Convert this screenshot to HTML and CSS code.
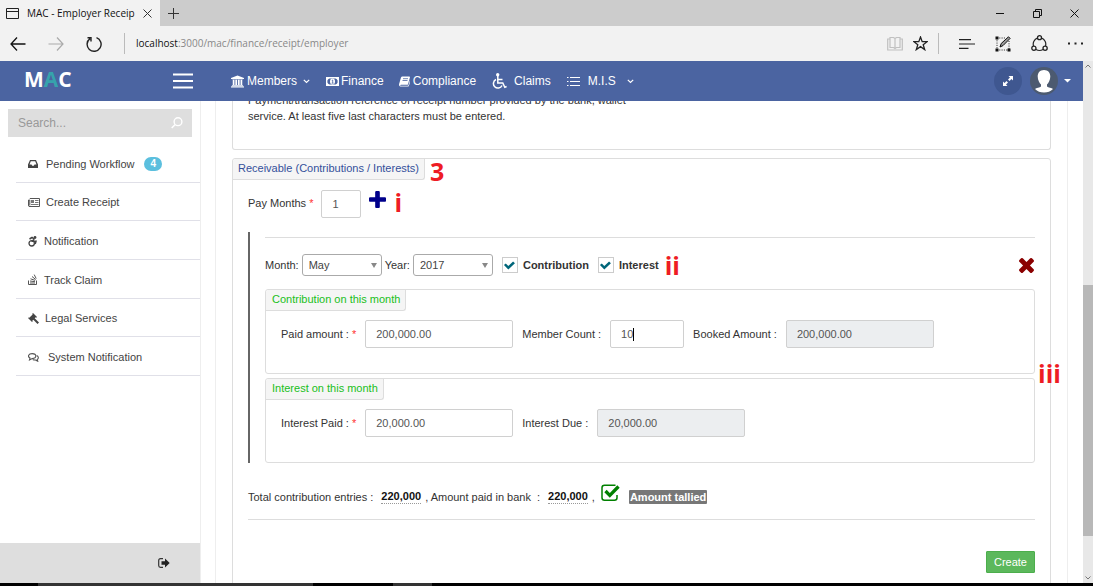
FILE: index.html
```html
<!DOCTYPE html>
<html lang="en">
<head>
<meta charset="utf-8">
<title>MAC - Employer Receipt</title>
<link rel="stylesheet" href="styles.css">
</head>
<body>
<div class="tabbar">
  <div class="tab">
    <svg class="tab-icon" width="13" height="11" viewBox="0 0 13 11"><path d="M.5.5h12v10H.5zM.5 3.500h12" fill="none" stroke="#222"/></svg>
    <span class="tab-title">MAC - Employer Receip</span>
    <button class="plain" aria-label="Close tab"><svg width="9" height="9" viewBox="0 0 9 9"><path d="M.5.5l8 8M8.500.5l-8 8" stroke="#333" fill="none"/></svg></button>
  </div>
  <button class="plain new-tab" aria-label="New tab"><svg width="11" height="11" viewBox="0 0 11 11"><path d="M5.500 0v11M0 5.500h11" stroke="#333"/></svg></button>
  <div class="window-buttons">
    <button class="plain" aria-label="Minimize"><svg width="9" height="9" viewBox="0 0 9 9"><path d="M0 4.500h8" stroke="#111"/></svg></button>
    <button class="plain" aria-label="Restore"><svg width="9" height="9" viewBox="0 0 9 9"><path d="M.5 2.500h6v6h-6zM2.500 2.500v-2h6v6h-2" stroke="#111" fill="none"/></svg></button>
    <button class="plain" aria-label="Close"><svg width="9" height="9" viewBox="0 0 9 9"><path d="M.5.5l8 8M8.500.5l-8 8" stroke="#111"/></svg></button>
  </div>
</div>
<div class="toolbar">
  <div class="nav-buttons">
    <button class="plain" aria-label="Back"><svg width="16" height="14" viewBox="0 0 16 14"><path d="M7 .5L1 7l6 6.500M1 7h14.500" fill="none" stroke="#111" stroke-width="1.300"/></svg></button>
    <button class="plain" aria-label="Forward"><svg width="16" height="14" viewBox="0 0 16 14"><path d="M9 .5L15 7l-6 6.500M15 7H.5" fill="none" stroke="#aaa" stroke-width="1.200"/></svg></button>
    <button class="plain" aria-label="Refresh"><svg width="16" height="16" viewBox="0 0 16 16"><path d="M10.500 1.700A7 7 0 1 1 4 2.600M1.500 1.800H5V5.500" fill="none" stroke="#222" stroke-width="1.400"/></svg></button>
  </div>
  <div class="address"><b>localhost</b>:3000/mac/finance/receipt/employer</div>
  <div class="tools">
    <button class="plain" aria-label="Reading view"><svg width="16" height="15" viewBox="0 0 16 15"><path d="M3 1.500h3.500L8 2.500l1.500-1H13v10H9.500L8 12.500l-1.500-1H3zM8 2.500v10M3 3H.7v11h14.600V3H13" fill="none" stroke="#c0c0c0" stroke-width="1.200"/></svg></button>
    <button class="plain star" aria-label="Favorite"><svg width="15" height="15" viewBox="0 0 15 15"><path d="M7.500 1l1.700 4.700h4.900l-3.900 3 1.500 4.900-4.200-3-4.200 3 1.500-4.900-3.900-3h4.900z" fill="none" stroke="#222" stroke-width="1.300"/></svg></button>
    <button class="plain" aria-label="Hub"><svg width="16" height="10" viewBox="0 0 16 10"><path d="M0 .7h12M0 5h16M0 9.300h9.500" stroke="#222" stroke-width="1.200"/></svg></button>
    <button class="plain" aria-label="Make a note"><svg width="16" height="16" viewBox="0 0 16 16"><path d="M2 2h9M2 2v12M2 14h12M14 5v9" fill="none" stroke="#222" stroke-dasharray="1 1.300"/><path d="M.5.5h3v3h-3zM.5 12.500h3v3h-3zM12.500 12.500h3v3h-3z" fill="#111"/><path d="M5 11l1.200-3.500L13.500.8l1.600 1.600L8 9.600z" fill="#999" stroke="#111"/></svg></button>
    <button class="plain" aria-label="Share"><svg width="17" height="17" viewBox="0 0 17 17"><path d="M6.500 3A6.500 6.500 0 0 0 2.500 11M10.500 3a6.500 6.500 0 0 1 4 8M5 14.500q3.500 2 7 0" fill="none" stroke="#222" stroke-width="1.200"/><g fill="none" stroke="#222" stroke-width="1.300"><circle cx="8.500" cy="2.700" r="2"/><circle cx="2.900" cy="13.300" r="2.100"/><circle cx="14.100" cy="13.300" r="2.100"/></g></svg></button>
    <button class="plain" aria-label="More"><svg width="16" height="3" viewBox="0 0 16 3"><path d="M0 .5h2v2H0zM6.500.5h2v2h-2zM13 .5h2v2h-2z" fill="#222"/></svg></button>
  </div>
</div>

<div class="viewport">
  <div class="app">
    <header class="header">
      <a class="logo" href="#">M<span>A</span>C</a>
      <button class="plain menu" aria-label="Toggle menu"><svg width="20" height="16" viewBox="0 0 20 16"><path d="M0 1.500h20M0 8h20M0 14.500h20" stroke="#fff" stroke-width="2"/></svg></button>
      <nav class="topnav">
        <a class="members" href="#"><svg width="13" height="13" viewBox="-128 0 1920 1792"><path fill="#fff" d="M832 0l960 384v128h-128q0 26-20 45t-48 19H68q-28 0-48-19T0 512h-128V384zM128 640h256v768h128V640h256v768h128V640h256v768h128V640h256v768h59q28 0 48 19t20 45v64H0v-64q0-26 20-45t48-19h60zm1595 960q28 0 48 19t20 45v128H-128v-128q0-26 20-45t48-19z"/></svg>Members<svg class="chev" width="7" height="5" viewBox="0 0 7 5"><path d="M.8.800L3.500 3.500 6.200.8" fill="none" stroke="#fff" stroke-width="1.200"/></svg></a>
        <a class="finance" href="#"><svg width="13" height="9" viewBox="0 0 13 9"><path d="M.7.700h11.600v7.600H.7z" fill="none" stroke="#fff" stroke-width="1.400"/><path fill="#fff" d="M1 1h2.500L1 3.500zM12 1v2.500L9.500 1zM1 8V5.500L3.500 8zM12 8H9.500L12 5.500z"/><ellipse cx="6.500" cy="4.500" rx="2.500" ry="3" fill="#fff"/><path d="M5.800 3.500l.9-.5v3M5.600 6.200h2" fill="none" stroke="#4b64a1" stroke-width=".8"/></svg>Finance</a>
        <a class="compliance" href="#"><svg width="11" height="11" viewBox="0 0 11 11"><path fill="#fff" d="M3.300.5h7q.9.200.6 1L9 8.200q-.2.600-.8.600H2q-1 .2-.7.900h7.400q.5 0 .8-.6L11 4q.2 4-1.500 6.500H1.300Q-.2 10.200.1 8L2 1.500Q2.400.6 3.300.5z"/><path d="M4 2.700h5M3.500 4.500h5" stroke="#4b64a1" stroke-width=".8"/></svg>Compliance</a>
        <a class="claims" href="#"><svg width="15" height="16" viewBox="0 0 15 16"><circle cx="5.700" cy="1.800" r="1.700" fill="#fff"/><path d="M5.800 3v7h5l2 4.300 1.800-.8M6 6.500h4.500" fill="none" stroke="#fff" stroke-width="1.500"/><path d="M4 6.500A4.500 4.500 0 1 0 10 12.500" fill="none" stroke="#fff" stroke-width="1.500"/></svg>Claims</a>
        <a class="mis" href="#"><svg width="13" height="11" viewBox="0 0 13 11"><path d="M0 1.500h1.500M3 1.500h10M0 5.500h1.500M3 5.500h10M0 9.500h1.500M3 9.500h10" stroke="#fff"/></svg>M.I.S<svg class="chev" width="7" height="5" viewBox="0 0 7 5"><path d="M.8.800L3.500 3.500 6.200.8" fill="none" stroke="#fff" stroke-width="1.200"/></svg></a>
      </nav>
      <div class="user">
        <button class="plain expand" aria-label="Full screen"><svg width="10" height="10" viewBox="0 0 10 10"><path fill="#fff" d="M5.500 0H10v4.500L8.500 3 6.500 5 5 3.500l2-2zM4.500 10H0V5.500L1.500 7l2-2L5 6.500l-2 2z"/></svg></button>
        <button class="plain avatar" aria-label="Account"><svg width="28" height="28" viewBox="0 0 28 28"><circle cx="14" cy="14" r="14" fill="#4c5a70"/><path fill="#fff" d="M14 3c4 0 6.300 2.800 6.300 6.500S18.500 16 17 17.500v2c1 1 5 1.500 6 2.500Q19.500 25.500 14 25.500T5 22c1-1 5-1.500 6-2.500v-2C9.500 16 7.700 13.200 7.700 9.500S10 3 14 3z"/></svg><svg width="7" height="4" viewBox="0 0 7 4"><path d="M0 0h7L3.500 3.500z" fill="#fff"/></svg></button>
      </div>
    </header>

    <div class="main">
      <aside class="sidebar">
        <form class="search"><input type="search" aria-label="Search" placeholder="Search..."><svg width="12" height="12" viewBox="0 0 12 12"><circle cx="7" cy="4.700" r="3.900" fill="none" stroke="#fff" stroke-width="1.400"/><path d="M4 7.700L.7 11" stroke="#fff" stroke-width="1.500"/></svg></form>
        <ul class="side-list">
          <li><a href="#"><svg width="10" height="8" viewBox="0 0 10 8"><path fill="#444" fill-rule="evenodd" d="M2 0h6l2 4.500V8H0V4.500zM2.800 1.200L1.500 4.500h2l.7 1.300h1.600l.7-1.300h2L7.200 1.200z"/></svg>Pending Workflow<span class="badge">4</span></a></li>
          <li class="receipt"><a href="#"><svg width="12" height="9" viewBox="0 0 12 9"><path d="M1.800.5h9.700v8H1Q.5 8.500.5 7V2h1.300v5.500" fill="none" stroke="#555"/><path d="M3 2h3v3H3z" fill="#777"/><path d="M7 2.500h3.500M7 4.500h3.500M3 6.500h7.500" stroke="#777"/></svg>Create Receipt</a></li>
          <li><a href="#"><svg width="9" height="11" viewBox="0 0 9 11"><circle cx="7" cy="1.500" r="1.400" fill="#444"/><path d="M1.500 3L4 1.500 6 3 4.500 5.200H8L7.200 8" fill="none" stroke="#444" stroke-width="1.500"/><circle cx="3.700" cy="7.300" r="2.700" fill="none" stroke="#444" stroke-width="1.300"/></svg>Notification</a></li>
          <li><a href="#"><svg width="9" height="11" viewBox="0 0 9 11"><path d="M.5 6.500v4h8v-4M2 9h5M2 7l5 .7M2.500 4.800l4.600 1.600M4 2.500l3.700 3M6.200.6l2 4" fill="none" stroke="#555"/></svg>Track Claim</a></li>
          <li class="legal"><a href="#"><svg width="11" height="11" viewBox="0 0 11 11"><path fill="#444" d="M5 0l4 4-.7.700-.6-.4-1 1L11 9.500 9.500 11 5.300 6.700l-1 1 .4.700L4 9 0 5l.7-.6.600.3L4.600 1.400 4.300.7z"/></svg>Legal Services</a></li>
          <li class="system"><a href="#"><svg width="11" height="9" viewBox="0 0 11 9"><path d="M4.200.6c2 0 3.600 1 3.600 2.500S6.200 5.600 4.200 5.600L1.500 7l.5-2C-.7 3.500.5.6 4.200.6zM8.700 2.500c2 1 2.200 3 .5 4l.5 1.700L7.500 7q-1.500.2-2.700-.5" fill="none" stroke="#555" stroke-width="1.100"/></svg>System Notification</a></li>
        </ul>
        <div class="side-footer"><button class="plain" aria-label="Log out"><svg width="12" height="10" viewBox="0 0 12 10"><path d="M5 .7H2.500Q.7.700.7 2.500v5q0 1.800 1.800 1.800H5" fill="none" stroke="#333" stroke-width="1.200"/><path fill="#222" d="M3.500 3.200H7V.5L11.700 5 7 9.500V6.800H3.500z"/></svg></button></div>
      </aside>

      <main class="content">
        <div class="panel">
          <section class="box reference"><p>Payment/transaction reference of receipt number provided by the bank, wallet service. At least five last characters must be entered.</p></section>

          <fieldset class="box receivable">
            <legend>Receivable (Contributions / Interests)</legend><span class="mark mark-title">3</span>
            <div class="inner">
              <div class="pay-row">
                <label for="months">Pay Months <i>*</i></label>
                <input id="months" class="field tiny" value="1">
                <button class="plain" aria-label="Add month"><svg width="17" height="17" viewBox="192 128 1408 1408"><path fill="#00008b" d="M1600 736v192q0 40-28 68t-68 28h-416v416q0 40-28 68t-68 28H800q-40 0-68-28t-28-68v-416H288q-40 0-68-28t-28-68V736q0-40 28-68t68-28h416V224q0-40 28-68t68-28h192q40 0 68 28t28 68v416h416q40 0 68 28t28 68z"/></svg></button>
                <span class="mark">i</span>
              </div>

              <div class="month-entry">
                <hr>
                <div class="month-row">
                  <label for="month">Month:</label>
                  <span class="pick"><select id="month"><option>May</option></select></span>
                  <label for="year">Year:</label>
                  <span class="pick"><select id="year"><option>2017</option></select></span>
                  <label class="check"><input type="checkbox" checked>Contribution</label>
                  <label class="check"><input type="checkbox" checked>Interest</label>
                  <span class="mark">ii</span>
                  <button class="plain remove" aria-label="Remove month"><svg width="15" height="15" viewBox="302 238 1188 1188"><path fill="#8b0000" d="M1490 1194q0 40-28 68l-136 136q-28 28-68 28t-68-28l-294-294-294 294q-28 28-68 28t-68-28l-136-136q-28-28-28-68t28-68l294-294-294-294q-28-28-28-68t28-68l136-136q28-28 68-28t68 28l294 294 294-294q28-28 68-28t68 28l136 136q28 28 28 68t-28 68l-294 294 294 294q28 28 28 68z"/></svg></button>
                </div>
                <fieldset class="box sub">
                  <legend>Contribution on this month</legend>
                  <div class="fields">
                    <label for="paid">Paid amount : <i>*</i></label><input id="paid" class="field wide" value="200,000.00">
                    <label for="count">Member Count :</label><span class="caret-wrap"><input id="count" class="field small" value="10"><span class="caret"></span></span>
                    <label for="booked">Booked Amount :</label><input id="booked" class="field wide" value="200,000.00" readonly>
                  </div>
                </fieldset>
                <fieldset class="box sub">
                  <legend>Interest on this month</legend>
                  <div class="fields">
                    <label for="ipaid">Interest Paid : <i>*</i></label><input id="ipaid" class="field wide" value="20,000.00">
                    <label for="idue">Interest Due :</label><input id="idue" class="field wide" value="20,000.00" readonly>
                  </div>
                </fieldset>
                <span class="mark mark-side">iii</span>
              </div>

              <div class="totals">
                <span>Total contribution entries :</span><b>220,000</b><span>, Amount paid in bank&nbsp; :</span><b>220,000</b><span>,</span>
                <svg width="20" height="18" viewBox="0 0 20 18"><path d="M14.500 1.200H3.500Q1 1.200 1 3.700v10Q1 16.200 3.500 16.200h10q2.500 0 2.500-2.500V11" fill="none" stroke="#008000" stroke-width="1.500"/><path d="M4.500 7l4.300 4.300L17.500 2.500" fill="none" stroke="#008000" stroke-width="3.300"/></svg>
                <span class="tally">Amount tallied</span>
              </div>
              <hr>
              <div class="actions"><button class="create" type="button">Create</button></div>
            </div>
          </fieldset>
        </div>
      </main>
    </div>
  </div>
  <div class="scrollbar">
    <svg width="6" height="4" viewBox="0 0 6 4"><path d="M.5 3.500L3 1l2.500 2.500" fill="none" stroke="#777"/></svg>
    <div class="thumb"></div>
    <svg width="6" height="4" viewBox="0 0 6 4"><path d="M.5.5L3 3 5.500.5" fill="none" stroke="#777"/></svg>
  </div>
</div>
<div class="taskbar"><span class="task-search"></span><span class="task-item"></span></div>
</body>
</html>
```
FILE: styles.css
```css
* { box-sizing: border-box; }
body {
  margin: 0;
  height: 100vh;
  display: flex;
  flex-direction: column;
  overflow: hidden;
  background: #fff;
  color: #333;
  font: 11px/16px "Liberation Sans", Arial, sans-serif;
}
svg { display: block; flex: none; }
a { color: inherit; text-decoration: none; }
i { color: #f33; font-style: normal; }
hr { margin: 0; border: 0; border-top: 1px solid #ddd; }
.plain { display: flex; align-items: center; padding: 0; border: 0; background: none; }

/* Browser window */
.tabbar, .toolbar { display: flex; align-items: center; flex: none; font-family: "Open Sans", sans-serif; }
.tabbar { height: 26px; background: #ccc; }
.tab { width: 160px; height: 26px; display: flex; align-items: center; gap: 8px; padding: 0 8px 0 6px; background: #f2f2f2; color: #111; font-size: 10px; }
.tab-title { flex: 1; white-space: nowrap; }
.new-tab { margin-left: 8px; }
.window-buttons { display: flex; gap: 28px; margin-left: auto; padding-right: 14px; }
.toolbar { height: 35px; background: #f2f2f2; }
.nav-buttons { display: flex; align-items: center; gap: 22px; padding: 0 22px 0 10px; }
.address { flex: 1; height: 21px; padding-left: 11px; border-left: 1px solid #bbb; color: #888; font-size: 10px; line-height: 20px; }
.address b { color: #111; font-weight: 400; }
.tools { display: flex; align-items: center; gap: 20px; padding-right: 9px; }
.tools .star { height: 21px; margin-left: -10px; padding-right: 10px; border-right: 1px solid #bbb; }
.viewport { flex: 1; min-height: 0; display: flex; }
.app { flex: 1; min-width: 0; display: flex; flex-direction: column; }
.scrollbar { width: 10px; display: flex; flex-direction: column; align-items: center; gap: 3px; padding: 3px 0; background: #e8e8e8; }
.thumb { width: 10px; height: 251px; margin-top: auto; margin-bottom: 37px; background: #b8b8b8; }
.taskbar { display: flex; flex: none; height: 3px; padding-left: 38px; gap: 80px; background: #000; }
.task-search { width: 275px; background: #333; }
.task-item { width: 39px; background: #333; }

/* Application header */
.header { flex: none; height: 40px; display: flex; align-items: center; background: #4b64a1; color: #fff; }
.logo { width: 173px; padding: 0 0 4px 24px; font: 700 21px/24px "Open Sans", sans-serif; }
.logo span { color: #36a3ac; }
.menu { width: 58px; }
.topnav { display: flex; align-items: center; gap: 16px; font-size: 12px; white-space: nowrap; }
.topnav a { display: flex; align-items: center; gap: 3px; }
.topnav .finance { gap: 2px; }
.topnav .compliance { gap: 3px; margin-left: -1px; }
.topnav .claims { gap: 7px; }
.topnav .mis { gap: 8px; }
.topnav .chev { margin-left: 3px; }
.user { display: flex; align-items: center; gap: 8px; margin-left: auto; padding-right: 12px; }
.expand { width: 28px; height: 28px; justify-content: center; border-radius: 50%; background: #3f5790; }
.avatar { gap: 6px; }

/* Sidebar */
.main { flex: 1; min-height: 0; display: flex; }
.sidebar { width: 201px; flex: none; display: flex; flex-direction: column; border-right: 1px solid #eee; }
.search { display: flex; align-items: center; margin: 8px 8px 0; padding: 0 9px 0 10px; height: 28px; background: #dedede; }
.search input { flex: 1; min-width: 0; padding: 0; border: 0; background: none; font: inherit; font-size: 12px; }
.search input::placeholder { color: #999; }
.side-list { display: grid; grid-auto-rows: 1fr; height: 232px; margin: 7px 0 0 16px; padding: 0; list-style: none; color: #444; }
.side-list li { display: flex; align-items: center; padding: 2px 0 0 12px; border-bottom: 1px solid #e0e0e8; }
.side-list a { display: flex; align-items: center; gap: 7px; }
.side-list li:first-child a { gap: 8px; }
.side-list .system a { gap: 9px; }
.side-list .legal a, .side-list .receipt a { gap: 6px; }
.badge { padding: 0 6px; margin-left: 2px; border-radius: 8px; background: #5bbfde; color: #fff; font-size: 10px; font-weight: 700; line-height: 14px; }
.side-footer { display: flex; justify-content: flex-end; height: 40px; margin-top: auto; padding-right: 30px; background: #dedede; }

/* Content */
.content { flex: 1; min-width: 0; padding: 0 15px 0 14px; overflow: hidden; }
.panel { height: 520px; margin-top: -9px; padding: 0 16px; border: 1px solid #eee; border-width: 0 1px; }
.box { min-width: 0; margin: 0; padding: 0; border: 1px solid #ddd; border-radius: 3px; }
.reference { height: 58px; margin-bottom: 8px; padding: 0 15px; border-top: 0; border-radius: 0 0 3px 3px; }
.reference p { max-width: 384px; margin: 0; }
legend { float: left; height: 21px; padding: 0 5px; border: 1px solid #ddd; border-width: 0 1px 1px 0; border-radius: 3px 0 3px 0; background: #f5f5f5; color: #34509b; line-height: 19px; }
.receivable { height: 470px; }
.inner { clear: both; padding: 9px 15px 0; }
.mark { color: #ee1c24; font: 700 25px/25px "Open Sans", Calibri, sans-serif; }
.mark-title { float: left; height: 21px; margin-left: 5px; }
.pay-row { display: flex; align-items: center; gap: 8px; height: 30px; margin-bottom: 13px; }
.pay-row label { padding-bottom: 2px; }
.pay-row .plain { margin-bottom: 10px; }
.pay-row .mark { padding-bottom: 4px; }
.field { height: 28px; padding: 0 10px; border: 1px solid #d0d0d0; border-radius: 2px; background: #fff; color: #555; font: inherit; }
.field[readonly] { background: #eceef0; }
.wide { width: 148px; }
.small { width: 74px; }
.tiny { width: 40px; }
.month-entry { position: relative; padding: 5px 0 0 15px; border-left: 2px solid #666; }
.month-row { display: flex; align-items: center; gap: 3px; height: 51px; padding-top: 3px; }
.month-row .mark { margin-left: 3px; }
.pick { position: relative; }
.pick::after { content: ""; position: absolute; right: 5px; top: 9px; border: 3px solid transparent; border-top: 5px solid #888; border-bottom: 0; }
.pick select { display: block; width: 80px; height: 22px; padding: 0 6px; appearance: none; border: 1px solid #aaa; border-radius: 3px; background: #fff; color: #444; font: inherit; }
.check { display: flex; align-items: center; gap: 5px; margin-left: 6px; font-weight: 700; }
.check input { appearance: none; width: 16px; height: 16px; margin: 0; border: 1px solid #ccc; }
.check input:checked::before { content: ""; display: block; width: 11px; height: 9px; margin: 3px 1px; background: #00667a; clip-path: polygon(0 45%, 17% 27%, 40% 55%, 83% 5%, 100% 24%, 40% 95%); }
.remove { margin-left: auto; padding-right: 1px; }
.sub { height: 85px; }
.sub + .sub { margin-top: 4px; }
.sub legend { color: #19bf19; padding-left: 6px; }
.fields { clear: both; display: flex; align-items: center; gap: 9px; padding: 9px 15px 0; }
.fields label { padding-bottom: 1px; }
.caret-wrap { position: relative; }
.caret { position: absolute; left: 23px; top: 8px; width: 1px; height: 13px; background: #000; }
.mark-side { position: absolute; right: -26px; top: 129px; }
.totals { display: flex; align-items: center; height: 56px; gap: 4px; padding-top: 12px; }
.totals b { margin-left: 4px; border-bottom: 1px dotted #999; color: #111; line-height: 13px; }
.totals svg { margin: 0 4px 8px 2px; }
.totals .tally { padding: 0 1px; border-radius: 1px; background: #777; color: #fff; font-weight: 700; line-height: 14px; }
.actions { display: flex; justify-content: flex-end; padding-top: 31px; }
.create { height: 22px; padding: 0 7px; border: 1px solid #4cae4c; border-radius: 1px; background: #5cb85c; color: #fff; font: inherit; }
```
